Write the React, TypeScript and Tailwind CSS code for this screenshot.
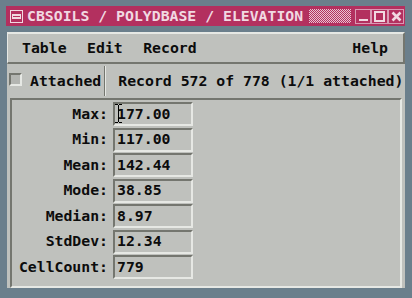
import React from 'react';

const rows: { label: string; value: string }[] = [
  { label: 'Max:', value: '177.00' },
  { label: 'Min:', value: '117.00' },
  { label: 'Mean:', value: '142.44' },
  { label: 'Mode:', value: '38.85' },
  { label: 'Median:', value: '8.97' },
  { label: 'StdDev:', value: '12.34' },
  { label: 'CellCount:', value: '779' },
];

const TitleIcon = () => (
  <svg width="13" height="13" viewBox="0 0 13 13" className="shrink-0">
    <rect x="0.5" y="0.5" width="12" height="12" fill="none" stroke="#f1d9e2" />
    <rect x="2.5" y="4.5" width="8" height="4" fill="#f1d9e2" stroke="#f1d9e2" />
    <line x1="3" y1="6.5" x2="10" y2="6.5" stroke="#b3305f" />
  </svg>
);

const Caret = () => (
  <svg width="7" height="19" viewBox="0 0 7 19" className="absolute left-[0px] top-[0px]">
    <path d="M0 0.5 H3 M4 0.5 H7 M3.5 1 V18 M0 18.5 H3 M4 18.5 H7" stroke="#000" strokeWidth="1" fill="none" />
  </svg>
);

export default function App() {
  return (
    <div className="w-[412px] h-[298px] bg-[#6b7f8c] pt-[6px] pl-[6px] overflow-hidden font-['DejaVu_Sans_Mono','Liberation_Mono',monospace] font-bold text-[14.8px] leading-none text-[#0c0c0c]">
      <div className="w-[400px]">
        {/* title bar */}
        <div className="h-[20px] w-[399px] bg-[#b3305f] flex items-center pl-[4px] pr-[1px] text-[#f1d9e2]">
          <TitleIcon />
          <span className="ml-[4px] whitespace-pre">CBSOILS / POLYDBASE / ELEVATION</span>
          <div className="ml-auto h-[14px] w-[42px] bg-[repeating-conic-gradient(#e9c3d3_0_25%,#b3305f_0_50%)] bg-[length:2px_2px]" />
          <div className="ml-[4px] flex">
            <div className="w-[16px] h-[15px] border border-[#d99ab4] flex items-end justify-center pb-[2px]">
              <div className="w-[9px] h-[2px] bg-[#f1d9e2]" />
            </div>
            <div className="w-[17px] h-[15px] border border-[#d99ab4] flex items-center justify-center">
              <div className="w-[11px] h-[11px] border-2 border-[#f1d9e2]" />
            </div>
            <div className="w-[16px] h-[15px] border border-[#d99ab4] flex items-center justify-center">
              <svg width="11" height="11" viewBox="0 0 11 11">
                <path d="M1.5 1.5 L9.5 9.5 M9.5 1.5 L1.5 9.5" stroke="#f1d9e2" strokeWidth="2.6" />
              </svg>
            </div>
          </div>
        </div>
        <div className="h-[6px]" />
        {/* window body */}
        <div className="ml-[1px] w-[398px] bg-[#bfc1bd]">
          {/* menu bar */}
          <div className="h-[32px] flex items-center pt-[1px] pl-[14px] pr-[15px] border-t-2 border-l border-t-[#e6e8e4] border-l-[#e6e8e4] border-b-2 border-r-2 border-b-[#74766f] border-r-[#74766f]">
            <div className="flex gap-[20.5px]">
              <span>Table</span>
              <span>Edit</span>
              <span>Record</span>
            </div>
            <span className="ml-auto">Help</span>
          </div>
          {/* status row */}
          <div className="h-[34px] flex items-center pl-[2px]">
            <div className="w-[13px] h-[13px] -mt-[3px] border-2 border-t-[#74766f] border-l-[#74766f] border-b-[#e6e8e4] border-r-[#e6e8e4] bg-[#b3b5b1]" />
            <span className="ml-[8px]">Attached</span>
            <div className="ml-[3px] h-[30px] flex">
              <div className="w-[1px] bg-[#74766f]" />
              <div className="w-[1px] bg-[#e6e8e4]" />
            </div>
            <span className="ml-[12px] whitespace-pre">Record 572 of 778 (1/1 attached)</span>
          </div>
          {/* fields panel */}
          <div className="mx-[3px] mb-[5px] pt-[2px] pb-[7px] border-2 border-t-[#74766f] border-l-[#74766f] border-b-[#e6e8e4] border-r-[#e6e8e4] flex flex-col gap-[1.5px]">
            {rows.map((r, i) => (
              <div key={r.label} className="flex items-center h-[24px]">
                <span className="w-[96px] text-right">{r.label}</span>
                <div className="relative ml-[5px] w-[80px] h-[24px] flex items-center pl-[2px] border-2 border-t-[#74766f] border-l-[#74766f] border-b-[#e6e8e4] border-r-[#e6e8e4]">
                  {i === 0 && <Caret />}
                  <span>{r.value}</span>
                </div>
              </div>
            ))}
          </div>
        </div>
      </div>
    </div>
  );
}
